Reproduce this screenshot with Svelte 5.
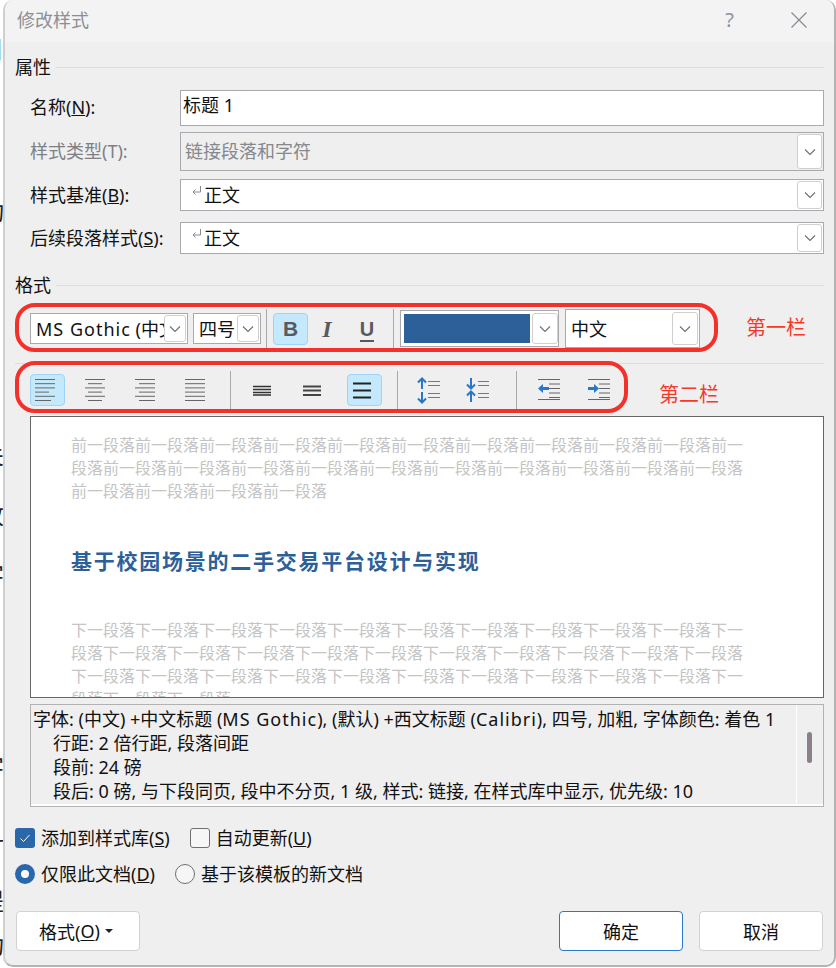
<script>
	const behind = [
		{ ch: '目', top: 34 }, { ch: '动', top: 196 }, { ch: '关', top: 440 }, { ch: '改', top: 500 },
		{ ch: '字', top: 560 }, { ch: '字', top: 752 }, { ch: '计', top: 828 }, { ch: '提', top: 886 }, { ch: '功', top: 930 }
	];
	const before = '前一段落'.repeat(25);
	const after = '下一段落'.repeat(34);
	const alignIcons = [
		{ name: 'left', on: true, lines: [[5, 25], [5, 25], [5, 25], [5, 19], [5, 25], [5, 21]] },
		{ name: 'center', on: false, lines: [[5, 25], [8, 22], [5, 25], [8, 22], [5, 25], [8, 22]] },
		{ name: 'right', on: false, lines: [[5, 25], [9, 25], [5, 25], [9, 25], [5, 25], [9, 25]] },
		{ name: 'justify', on: false, lines: [[5, 25], [5, 25], [5, 25], [5, 25], [5, 25], [5, 25]] }
	];
</script>

{#snippet chevron()}
	<span class="drop">
		<svg width="12" height="8" viewBox="0 0 12 8"><path d="M1 1.5 6 6.5 11 1.5" fill="none" stroke="#6b6e75" stroke-width="1.1" /></svg>
	</span>
{/snippet}

{#snippet returnMark()}
	<svg class="ret" width="11" height="12" viewBox="0 0 11 12"><path d="M9.5 1v6H2M4.5 4.5 2 7l2.5 2.5" fill="none" stroke="#8a8a8a" stroke-width="1" /></svg>
{/snippet}

<div class="page">
	<div class="behind">
		{#each behind as b}
			<span style="top:{b.top}px">{b.ch}</span>
		{/each}
	</div>

	<div class="dialog">
		<header class="titlebar">
			<span class="title">修改样式</span>
			<div class="winbtns">
				<span class="help">?</span>
				<svg width="16" height="16" viewBox="0 0 16 16"><path d="M.5.5l15 15M15.5.5l-15 15" stroke="#858a94" stroke-width="1.2" fill="none" /></svg>
			</div>
		</header>

		<div class="content">
			<div class="section-head first"><span>属性</span><i></i></div>

			<div class="form">
				<label class="lbl name-row">名称(<u>N</u>):</label>
				<div class="field name-row">标题 1</div>

				<label class="lbl off type-row">样式类型(T):</label>
				<div class="field type type-row">链接段落和字符{@render chevron()}</div>

				<label class="lbl">样式基准(<u>B</u>):</label>
				<div class="field">{@render returnMark()}正文{@render chevron()}</div>

				<label class="lbl">后续段落样式(<u>S</u>):</label>
				<div class="field">{@render returnMark()}正文{@render chevron()}</div>
			</div>

			<div class="section-head second"><span>格式</span><i></i></div>

			<div class="bar-row">
				<div class="oval one">
					<div class="combo font"><span class="combo-text"><span class="wide-latin">MS Gothic</span> (中文)</span>{@render chevron()}</div>
					<div class="combo size"><span class="combo-text">四号</span>{@render chevron()}</div>
					<b class="sep"></b>
					<button class="tool b on">B</button>
					<button class="tool i">I</button>
					<button class="tool u"><span>U</span></button>
					<b class="sep last"></b>
					<div class="combo color"><span class="swatch"></span>{@render chevron()}</div>
					<div class="combo lang"><span class="combo-text">中文</span>{@render chevron()}</div>
				</div>
				<span class="note">第一栏</span>
			</div>

			<div class="bar-row two">
				<div class="oval">
					{#each alignIcons as icon}
						<button class="ic" class:on={icon.on} aria-label={icon.name}>
							<svg width="35" height="32" viewBox="0 0 35 32">
								{#each icon.lines as l, i}
									<path d="M{l[0]} {5.5 + i * 4.2}H{l[1]}" stroke="#666" stroke-width="1" />
								{/each}
							</svg>
						</button>
					{/each}
					<b class="sep"></b>
					<button class="ic" aria-label="single">
						<svg width="35" height="32" viewBox="0 0 35 32"><path d="M6 12.5H24M6 15.5H24M6 18.5H24M6 21H24" stroke="#333" stroke-width="1.5" /></svg>
					</button>
					<button class="ic" aria-label="one and half">
						<svg width="35" height="32" viewBox="0 0 35 32"><path d="M6 12.5H24M6 16.5H24M6 21H24" stroke="#444" stroke-width="2" /></svg>
					</button>
					<button class="ic on" aria-label="double">
						<svg width="35" height="32" viewBox="0 0 35 32"><path d="M6 9.5H24M6 16.5H24M6 23.5H24" stroke="#222" stroke-width="2" /></svg>
					</button>
					<b class="sep"></b>
					<button class="ic" aria-label="more spacing">
						<svg width="35" height="32" viewBox="0 0 35 32">
							<path d="M8 5v10M4 8.5 8 4.5l4 4M8 18v10M4 24.5l4 4 4-4" fill="none" stroke="#2a76c6" stroke-width="2" />
							<path d="M14 7.5H26M14 11.5H26M14 19.5H26M14 23.5H26" stroke="#777" stroke-width="1" />
						</svg>
					</button>
					<button class="ic" aria-label="less spacing">
						<svg width="35" height="32" viewBox="0 0 35 32">
							<path d="M7 4v10M3 10.5l4 4 4-4M7 18v10M3 21.5l4-4 4 4" fill="none" stroke="#2a76c6" stroke-width="2" />
							<path d="M14 7.5H25M14 11.5H25M14 19.5H25M14 23.5H25" stroke="#777" stroke-width="1" />
						</svg>
					</button>
					<b class="sep wide"></b>
					<button class="ic" aria-label="outdent">
						<svg width="35" height="32" viewBox="0 0 35 32">
							<path d="M5 5.5H27M16 10H27M16 14.5H27M16 19H27M16 23.5H27M5 25.5H27" stroke="#666" stroke-width="1" />
							<path d="M16 14.5H9" stroke="#2a76c6" stroke-width="3" /><path d="M10 10 5 14.5 10 19Z" fill="#2a76c6" />
						</svg>
					</button>
					<button class="ic" aria-label="indent">
						<svg width="35" height="32" viewBox="0 0 35 32">
							<path d="M5 5.5H27M16 10H27M16 14.5H27M16 19H27M16 23.5H27M5 25.5H27" stroke="#666" stroke-width="1" />
							<path d="M5 14.5H12" stroke="#2a76c6" stroke-width="3" /><path d="M11 10 16 14.5 11 19Z" fill="#2a76c6" />
						</svg>
					</button>
				</div>
				<span class="note low">第二栏</span>
			</div>

			<div class="preview">
				<p class="ghost">{before}</p>
				<p class="heading">基于校园场景的二手交易平台设计与实现</p>
				<p class="ghost after">{after}</p>
			</div>

			<div class="desc">
				<div class="desc-text">
					<div>字体: (中文) +中文标题 (<span class="wide-latin">MS Gothic</span>), (默认) +西文标题 (<span class="wide-latin">Calibri</span>), 四号, 加粗, 字体颜色: 着色 1</div>
					<div class="ind">行距: 2 倍行距, 段落间距</div>
					<div class="ind">段前: 24 磅</div>
					<div class="ind">段后: 0 磅, 与下段同页, 段中不分页, 1 级, 样式: 链接, 在样式库中显示, 优先级: 10</div>
				</div>
				<div class="scroll"><span class="thumb"></span></div>
			</div>

			<div class="opts checks">
				<span class="box checked">
					<svg width="14" height="12" viewBox="0 0 14 12"><path d="M2.5 6.5 5.5 9.5 11.5 3" fill="none" stroke="#fff" stroke-width="1" /></svg>
				</span>
				<span class="opt-text">添加到样式库(<u>S</u>)</span>
				<span class="box auto"></span>
				<span class="opt-text">自动更新(<u>U</u>)</span>
			</div>

			<div class="opts radios">
				<span class="radio picked"></span>
				<span class="opt-text">仅限此文档(<u>D</u>)</span>
				<span class="radio tpl"></span>
				<span class="opt-text">基于该模板的新文档</span>
			</div>

			<div class="footer">
				<button class="btn fmt">格式(<u>O</u>)<i class="caret"></i></button>
				<div class="footer-right">
					<button class="btn primary">确定</button>
					<button class="btn">取消</button>
				</div>
			</div>
		</div>
	</div>
</div>

<style>
	:global(body) {
		margin: 0;
		background: #fff;
	}
	.page {
		position: relative;
		width: 836px;
		height: 968px;
		overflow: hidden;
		font-family: "Noto Sans", "Noto Sans CJK SC", sans-serif;
		font-size: 18px;
		color: #111;
	}
	.behind {
		position: absolute;
		left: 0;
		top: 0;
		width: 4px;
		height: 968px;
		overflow: hidden;
	}
	.behind span {
		position: absolute;
		right: 0;
		font-size: 24px;
		line-height: 30px;
		color: #222;
	}
	.dialog {
		position: relative;
		box-sizing: border-box;
		margin-left: 3px;
		width: 833px;
		height: 967px;
		background: #efefef;
		border: 2px solid #b4b4b4;
		border-left-color: #cfcfcf;
		border-top: 0;
		border-radius: 10px;
		overflow: hidden;
	}
	.titlebar {
		box-sizing: border-box;
		height: 42px;
		background: #f3f3f3;
		display: flex;
		align-items: center;
		justify-content: space-between;
		padding: 0 27px 2px 12px;
	}
	.title {
		color: #8b8f95;
		line-height: 40px;
	}
	.winbtns {
		display: flex;
		align-items: center;
		gap: 57px;
	}
	.help {
		color: #8d929a;
		font-size: 20px;
		line-height: 24px;
	}
	.content {
		padding: 0 10px;
	}
	.section-head {
		display: flex;
		align-items: center;
		gap: 5px;
		height: 22px;
		line-height: 22px;
	}
	.section-head i {
		flex: 1;
		height: 1px;
		background: #dedede;
	}
	.section-head.first {
		margin-top: 14px;
	}
	.section-head.second {
		margin-top: 20px;
	}
	.form {
		display: grid;
		grid-template-columns: 150px 1fr;
		grid-template-rows: 42px 47px 43px 32px;
		margin: 12px 0 0 15px;
	}
	.lbl {
		line-height: 32px;
	}
	.lbl.name-row {
		line-height: 34px;
	}
	.lbl.type-row {
		line-height: 39px;
	}
	.lbl.off {
		color: #7d8085;
	}
	.field {
		position: relative;
		box-sizing: border-box;
		height: 32px;
		background: #fff;
		border: 1px solid #a9a9ae;
		display: flex;
		align-items: center;
		padding: 0 0 2px 10px;
	}
	.field.name-row {
		height: 36px;
		padding-left: 2px;
		padding-bottom: 8px;
	}
	.field.type-row {
		height: 39px;
		background: #efefef;
		color: #85888c;
		padding-left: 4px;
		padding-bottom: 4px;
	}
	.ret {
		margin-right: 2px;
		margin-top: -6px;
	}
	.drop {
		position: absolute;
		right: 1px;
		top: 1px;
		bottom: 1px;
		width: 25px;
		box-sizing: border-box;
		background: #fff;
		border: 1px solid #cfcfd2;
		border-radius: 3px;
		display: flex;
		align-items: center;
		justify-content: center;
	}
	.bar-row {
		display: flex;
		align-items: center;
		margin-top: 7px;
	}
	.bar-row.two {
		margin-top: 11px;
		border-top: 1px solid #dedede;
	}
	.oval {
		box-sizing: border-box;
		background: #efefef;
		border: 4px solid #f3302a;
		border-radius: 20px;
		display: flex;
		align-items: stretch;
		gap: 15px;
		height: 52px;
		width: 613px;
		margin-top: -3px;
		padding: 6px 7px 0 11px;
	}
	.oval.one {
		height: 49px;
		width: 703px;
		margin-top: 0;
		padding: 2px 0 0 11px;
		gap: 0;
		align-items: center;
	}
	.combo {
		position: relative;
		box-sizing: border-box;
		height: 31px;
		background: #fff;
		border: 1px solid #a9a9ae;
		display: flex;
		align-items: center;
		padding: 0 0 2px 5px;
		overflow: hidden;
	}
	.combo-text {
		white-space: nowrap;
		overflow: hidden;
	}
	.wide-latin {
		letter-spacing: 1px;
	}
	.combo.font {
		width: 158px;
	}
	.combo.font .combo-text {
		width: 128px;
	}
	.combo.size {
		width: 68px;
		margin-left: 5px;
	}
	.combo .drop {
		width: 22px;
	}
	.combo.color {
		width: 159px;
		height: 37px;
		padding: 0 0 0 3px;
	}
	.combo.color .drop,
	.combo.lang .drop {
		width: 26px;
		top: 2px;
		bottom: 2px;
	}
	.combo.color .drop {
		right: 0;
	}
	.swatch {
		width: 126px;
		height: 29px;
		background: #2d5f98;
	}
	.combo.lang {
		width: 135px;
		height: 39px;
		margin-left: 6px;
	}
	.sep {
		flex: none;
		width: 1px;
		background: #a9a9a9;
		margin-right: 1px;
		align-self: stretch;
	}
	.sep.wide {
		margin-left: 2px;
	}
	.one .sep {
		margin: 0 6px 0 5px;
		height: 39px;
	}
	.one .sep.last {
		margin-right: 6px;
	}
	.tool, .ic {
		appearance: none;
		padding: 0;
		background: none;
		border: 1px solid transparent;
		border-radius: 4px;
		box-sizing: border-box;
		font-family: inherit;
	}
	.tool.on, .ic.on {
		background: #c5e9fc;
		border-color: #9fd3f8;
	}
	.ic {
		flex: none;
		width: 35px;
		height: 32px;
		margin-top: 3px;
		display: block;
	}
	.ic svg {
		display: block;
		margin: -1px;
	}
	.tool {
		flex: none;
		height: 32px;
		color: #5a5a5e;
		font-size: 21px;
		line-height: 28px;
	}
	.tool.b {
		width: 35px;
		font-family: "Liberation Sans", sans-serif;
		font-weight: bold;
	}
	.tool.i {
		width: 38px;
		font-family: "Liberation Serif", serif;
		font-style: italic;
		font-weight: bold;
		font-size: 24px;
	}
	.tool.u {
		width: 42px;
		font-family: "Liberation Sans", sans-serif;
		font-weight: bold;
		font-size: 20px;
	}
	.tool.u span {
		border-bottom: 2px solid #5a5a5e;
		line-height: 22px;
		display: inline-block;
	}
	.note {
		color: #f33a2a;
		font-size: 20px;
		margin-left: 28px;
		line-height: 28px;
	}
	.note.low {
		margin-left: 31px;
		margin-top: 12px;
	}
	.preview {
		box-sizing: border-box;
		height: 282px;
		margin: 3px 0 0 15px;
		background: #fff;
		border: 1px solid #666;
		padding: 17px 0 0 40px;
		overflow: hidden;
	}
	.preview p {
		margin: 0;
		width: 673px;
	}
	.ghost {
		font-size: 16px;
		line-height: 23px;
		color: #c4c4c4;
		word-break: break-all;
	}
	.preview .heading {
		margin-top: 43px;
		font-size: 21px;
		line-height: 30px;
		font-weight: bold;
		letter-spacing: 1.75px;
		color: #2d5f98;
	}
	.preview .ghost.after {
		margin-top: 43px;
	}
	.desc {
		box-sizing: border-box;
		display: flex;
		height: 103px;
		margin: 6px 0 0 15px;
		border: 1px solid #b2b2b2;
		box-shadow: inset 0 -2px 0 #fff;
	}
	.desc-text {
		flex: 1;
		padding: 2px 0 0 2px;
		font-size: 18px;
		line-height: 24px;
		white-space: nowrap;
		overflow: hidden;
	}
	.ind {
		padding-left: 20px;
	}
	.scroll {
		flex: none;
		width: 27px;
		border-left: 1px solid #fff;
		margin-bottom: 2px;
		box-sizing: border-box;
		padding: 27px 0 0 10px;
	}
	.thumb {
		display: block;
		width: 5px;
		height: 31px;
		border-radius: 3px;
		background: #8b8089;
	}
	.opts {
		display: flex;
		align-items: center;
		height: 20px;
	}
	.checks {
		margin-top: 21px;
	}
	.radios {
		margin-top: 16px;
	}
	.opt-text {
		margin-left: 6px;
		line-height: 20px;
		white-space: nowrap;
	}
	.box {
		box-sizing: border-box;
		width: 20px;
		height: 20px;
		border-radius: 3px;
		flex: none;
		display: flex;
		align-items: center;
		justify-content: center;
	}
	.box.checked {
		background: #2b67ab;
	}
	.box.auto {
		margin-left: 20px;
		background: #f6f6f6;
		border: 1px solid #6f6f6f;
	}
	.radio {
		box-sizing: border-box;
		width: 20px;
		height: 20px;
		border-radius: 50%;
		flex: none;
	}
	.radio.picked {
		background: #fff;
		border: 6px solid #2b67ab;
	}
	.radio.tpl {
		margin-left: 20px;
		background: #f6f6f6;
		border: 1px solid #6f6f6f;
	}
	.footer {
		display: flex;
		justify-content: space-between;
		margin-top: 27px;
		padding: 0 1px;
	}
	.footer-right {
		display: flex;
		gap: 16px;
	}
	.btn {
		appearance: none;
		box-sizing: border-box;
		width: 124px;
		height: 40px;
		background: #fff;
		border: 1px solid #d2d2d2;
		border-radius: 4px;
		font-family: inherit;
		font-size: 18px;
		color: #111;
		padding: 0;
		display: flex;
		align-items: center;
		justify-content: center;
	}
	.btn.fmt {
		padding-right: 4px;
	}
	.btn u {
		text-underline-offset: 2px;
	}
	.btn.primary {
		border-color: #2a78c9;
	}
	.caret {
		width: 0;
		height: 0;
		margin-left: 5px;
		border-left: 4px solid transparent;
		border-right: 4px solid transparent;
		border-top: 4px solid #222;
	}
</style>
